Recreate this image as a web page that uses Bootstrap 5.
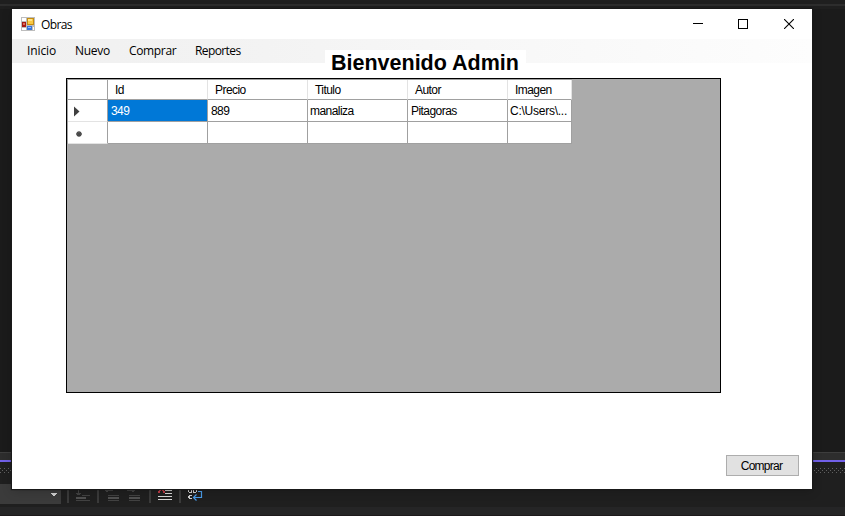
<!DOCTYPE html>
<html lang="es">
<head>
<meta charset="utf-8">
<title>Obras</title>
<link href="https://cdn.jsdelivr.net/npm/bootstrap@5.3.0/dist/css/bootstrap.min.css" rel="stylesheet">
<style>
body{width:845px;height:516px;background:#1b1b1b;font-family:"Liberation Sans",Arial,sans-serif;font-size:11px;color:#000}
.ide-top{height:9px;background:linear-gradient(#1f1f1f 4px,#2d2d2d 4px,#2d2d2d 6px,#1f1f1f 6px)}
.ide-strip{height:8px;background:#2d2d2d;border-top:1px solid #3d3d3d}
.ide-accent{height:2px;background:#7160e8}
.ide-panel{height:22px;background:#1f1f1f;padding-top:6px}
.ide-dots{height:5px;background-image:radial-gradient(circle at .5px .5px,#606060 .6px,transparent .7px),radial-gradient(circle at 2.5px 2.5px,#606060 .6px,transparent .7px);background-size:4px 4px}
.ide-tools{height:23px;background:#1f1f1f}
.ide-combo{width:61px;height:20px;background:#3b3b3b}
.ide-icons{margin-left:-10px}
.ide-foot{height:9px;background:#252526;border-bottom:1px solid #1d191b}
.win{left:12px;top:9px;width:800px;height:480px;background:#fff;box-shadow:0 0 1px 1px #191919,0 2px 10px rgba(0,0,0,.2)}
.win-title{height:30px;padding-left:9px;font:12px "Open Sans","Noto Sans",sans-serif}
.win-title .caption-text{margin-left:6px;letter-spacing:-.6px}
.win-ctl{width:45.5px}
.win-ctl.mid{padding-right:1px}
.win-menu{height:24px;padding-left:15px;background:linear-gradient(90deg,#f0f0f0,#f2f2f2 25%,#f8f8f8 65%,#fdfdfd);font:12px "Open Sans","Noto Sans",sans-serif}
.win-menu .nav-link{padding:0;color:#000;white-space:nowrap;line-height:24px;letter-spacing:-.2px}
.win-menu .m1{width:48px;letter-spacing:-.1px}.win-menu .m2{width:54px;letter-spacing:-.3px}.win-menu .m3{width:66px;letter-spacing:-.35px}.win-menu .m4{letter-spacing:-.6px}
.hello{left:313px;top:41px;width:201px;height:28px;background:#fff;font-size:21.5px;font-weight:700;line-height:27px;padding-left:6px;white-space:nowrap}
.grid-box{margin:15px 0 0 54px;width:655px;height:315px;background:#ababab;border:1px solid #000}
.dgv{width:505px;table-layout:fixed;border-collapse:separate;border-spacing:0;border-left:1px solid #a0a0a0;border-top:1px solid #a0a0a0;line-height:14px;font-size:12px;letter-spacing:-.55px}
.dgv th,.dgv td{background:#fff;border-right:1px solid #a0a0a0;border-bottom:1px solid #a0a0a0;font-weight:400;padding:1px 0 0 3px;white-space:nowrap;overflow:hidden;height:22px}
.dgv thead th{height:20px;padding-left:7px;border-right-color:#e3e3e3}
.dgv thead th:first-child{border-right-color:#a0a0a0}
.dgv tbody th{border-bottom-color:#e3e3e3}
.dgv td.picked{background:#0078d7;color:#fff}
.dgv td.name{padding-left:2px}
.dgv td.path{padding-left:2px;letter-spacing:-.25px}
.dgv svg{display:block}
.buy{width:73px;height:21px;margin:62px 0 0 714px;padding:1px 2px 0 0;border:1px solid #adadad;border-radius:0;background:#e1e1e1;font-size:12px;line-height:18px;color:#000;letter-spacing:-.75px}
</style>
<script src="https://cdn.jsdelivr.net/npm/bootstrap@5.3.0/dist/js/bootstrap.bundle.min.js"></script>
</head>
<body class="position-relative overflow-hidden d-flex flex-column">
<div class="ide-top"></div>
<div class="flex-grow-1"></div>
<div class="ide-strip"></div>
<div class="ide-accent"></div>
<div class="ide-panel"><div class="ide-dots"></div></div>
<div class="ide-tools d-flex">
  <div class="ide-combo"></div>
  <svg class="ide-icons" width="160" height="20" shape-rendering="crispEdges">
    <path d="M0 9h6v1H0zM1 10h4v1H1zM2 11h2v1H2z" fill="#d0d0d0"/>
    <path d="M16 0h2v19h-2zM46 0h2v19h-2zM98 0h2v19h-2zM128 0h2v19h-2z" fill="#3a3a3a"/>
    <path d="M27 0h1v11h-1zM25 9h5v1h-5zM26 10h3v1h-3zM31 11h8v1h-8zM25 16h14v1H25zM57 11h11v1H57zM57 16h11v1H57zM78 11h11v1H78zM78 16h11v1H78zM54 6h8v1h-8zM55 5h2v3h-2zM76 6h8v1h-8zM81 5h2v3h-2z" fill="#424242"/>
    <path d="M25 13h10v2H25zM57 13h11v2H57zM78 13h11v2H78z" fill="#505050"/>
    <path d="M109 5h3v1h-3zM108 6h2v1h-2zM111 6h2v1h-2zM107 7h2v2h-2zM112 7h2v2h-2z" fill="#bd3945"/>
    <path d="M114 6h7v1h-7zM114 9h7v1h-7zM107 12h14v1h-14zM107 15h14v1h-14z" fill="#d8d8d8"/>
    <path d="M137 6h1v2h-1zM138 5h3v1h-3zM138 8h3v1h-3zM140 5h1v4h-1zM142 5h1v4h-1zM143 5h2v1h-2zM145 6h1v2h-1zM143 8h2v1h-2zM138 11h3v1h-3zM137 12h2v2h-2zM138 14h3v1h-3z" fill="#d0d0d0"/>
    <path d="M147 7.500h3.500v6h-7.500M145.500 10.500l-3 3 3 3" fill="none" stroke="#4a9ce8" stroke-width="1.200" shape-rendering="auto"/>
  </svg>
</div>
<div class="ide-foot"></div>

<main class="win position-absolute">
  <header class="win-title d-flex align-items-center">
    <svg width="14" height="14" shape-rendering="crispEdges">
      <path d="M0 0h14v14H0z" fill="#bdbdbd"/><path d="M1 1h4v3H1zM1 11h4v2H1zM12 10h1v3h-1z" fill="#fff"/>
      <path d="M1 5h4v5H1z" fill="#a51b13"/><path d="M2 6h2v2H2z" fill="#e06a58"/>
      <path d="M6 1h7v7H6z" fill="#c48c12"/><path d="M7 2h5v5H7z" fill="#f9c843"/><path d="M7 2h4v2H7z" fill="#ffe48a"/>
      <path d="M6 9h5v4H6z" fill="#3975d8"/><path d="M7 10h3v1H7z" fill="#91bbff"/>
    </svg>
    <span class="caption-text me-auto">Obras</span>
    <div class="win-ctl d-flex justify-content-center"><svg width="10" height="10" shape-rendering="crispEdges"><path d="M0 4h10v1H0z"/></svg></div>
    <div class="win-ctl mid d-flex justify-content-center"><svg width="10" height="10" shape-rendering="crispEdges"><path d="M0 0h10v10H0zM1 1v8h8V1z" fill-rule="evenodd"/></svg></div>
    <div class="win-ctl d-flex justify-content-center"><svg width="10" height="10"><path d="M0 0l10 10M10 0L0 10" fill="none" stroke="#000" stroke-width="1.100"/></svg></div>
  </header>
  <nav class="win-menu nav flex-nowrap">
    <a class="nav-link m1">Inicio</a><a class="nav-link m2">Nuevo</a><a class="nav-link m3">Comprar</a><a class="nav-link m4">Reportes</a>
  </nav>
  <div class="hello position-absolute">Bienvenido Admin</div>
  <div class="grid-box position-relative">
    <table class="dgv">
      <colgroup><col style="width:40px"><col style="width:100px"><col style="width:100px"><col style="width:100px"><col style="width:100px"><col style="width:64px"></colgroup>
      <thead><tr><th></th><th>Id</th><th>Precio</th><th>Titulo</th><th>Autor</th><th>Imagen</th></tr></thead>
      <tbody>
        <tr><th><svg width="12" height="11"><path d="M3 .5v10l5.500-5z" fill="#404040"/></svg></th><td class="picked">349</td><td>889</td><td class="name">manaliza</td><td>Pitagoras</td><td class="path">C:\Users\...</td></tr>
        <tr><th><svg width="14" height="11"><path d="M8 3v6M5 6h6M6 4l4 4M10 4l-4 4" fill="none" stroke="#484848" stroke-width="1.300"/></svg></th><td></td><td></td><td></td><td></td><td></td></tr>
      </tbody>
    </table>
  </div>
  <button class="btn buy d-block">Comprar</button>
</main>
</body>
</html>
